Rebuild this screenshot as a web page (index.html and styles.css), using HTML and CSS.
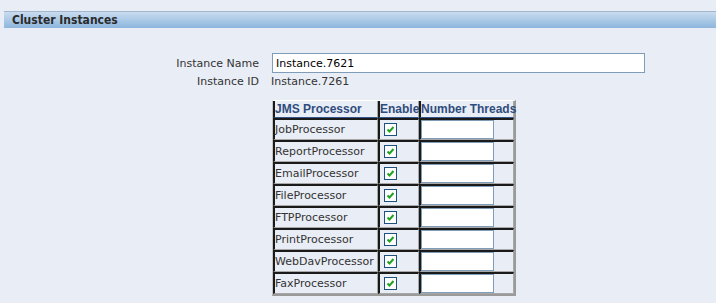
FILE: index.html
```html
<!DOCTYPE html>
<html lang="en">

<head>
  <meta charset="UTF-8">
  <meta name="viewport" content="width=device-width, initial-scale=1.0">
  <title>Cluster Instances</title>
  <link rel="stylesheet" href="styles.css">
</head>

<body>

  <div class="section__head">Cluster Instances</div>

  <div class="section__form">
    <label class="form__label" for="instance-name">Instance Name</label>
    <input class="form__text" id="instance-name" type="text" value="Instance.7621">

    <span class="form__label form__label--row">Instance ID</span>
    <span class="form__value">Instance.7261</span>

    <span></span>
    <table class="processors">
      <colgroup>
        <col class="col__name">
        <col class="col__enable">
        <col class="col__threads">
      </colgroup>
      <thead>
        <tr>
          <th>JMS Processor</th>
          <th>Enable</th>
          <th>Number Threads</th>
        </tr>
      </thead>
      <tbody>
        <tr>
          <td>JobProcessor</td>
          <td><svg class="check" width="13" height="13" viewBox="0 0 13 13"><rect x="0.5" y="0.5" width="12" height="12" fill="#fff" stroke="#1c5180"/><path d="M3.5 6.5l2 2 4-4.5" fill="none" stroke="#21a121" stroke-width="2"/></svg></td>
          <td><input class="threads__input" type="text"></td>
        </tr>
        <tr>
          <td>ReportProcessor</td>
          <td><svg class="check" width="13" height="13" viewBox="0 0 13 13"><rect x="0.5" y="0.5" width="12" height="12" fill="#fff" stroke="#1c5180"/><path d="M3.5 6.5l2 2 4-4.5" fill="none" stroke="#21a121" stroke-width="2"/></svg></td>
          <td><input class="threads__input" type="text"></td>
        </tr>
        <tr>
          <td>EmailProcessor</td>
          <td><svg class="check" width="13" height="13" viewBox="0 0 13 13"><rect x="0.5" y="0.5" width="12" height="12" fill="#fff" stroke="#1c5180"/><path d="M3.5 6.5l2 2 4-4.5" fill="none" stroke="#21a121" stroke-width="2"/></svg></td>
          <td><input class="threads__input" type="text"></td>
        </tr>
        <tr>
          <td>FileProcessor</td>
          <td><svg class="check" width="13" height="13" viewBox="0 0 13 13"><rect x="0.5" y="0.5" width="12" height="12" fill="#fff" stroke="#1c5180"/><path d="M3.5 6.5l2 2 4-4.5" fill="none" stroke="#21a121" stroke-width="2"/></svg></td>
          <td><input class="threads__input" type="text"></td>
        </tr>
        <tr>
          <td>FTPProcessor</td>
          <td><svg class="check" width="13" height="13" viewBox="0 0 13 13"><rect x="0.5" y="0.5" width="12" height="12" fill="#fff" stroke="#1c5180"/><path d="M3.5 6.5l2 2 4-4.5" fill="none" stroke="#21a121" stroke-width="2"/></svg></td>
          <td><input class="threads__input" type="text"></td>
        </tr>
        <tr>
          <td>PrintProcessor</td>
          <td><svg class="check" width="13" height="13" viewBox="0 0 13 13"><rect x="0.5" y="0.5" width="12" height="12" fill="#fff" stroke="#1c5180"/><path d="M3.5 6.5l2 2 4-4.5" fill="none" stroke="#21a121" stroke-width="2"/></svg></td>
          <td><input class="threads__input" type="text"></td>
        </tr>
        <tr>
          <td>WebDavProcessor</td>
          <td><svg class="check" width="13" height="13" viewBox="0 0 13 13"><rect x="0.5" y="0.5" width="12" height="12" fill="#fff" stroke="#1c5180"/><path d="M3.5 6.5l2 2 4-4.5" fill="none" stroke="#21a121" stroke-width="2"/></svg></td>
          <td><input class="threads__input" type="text"></td>
        </tr>
        <tr>
          <td>FaxProcessor</td>
          <td><svg class="check" width="13" height="13" viewBox="0 0 13 13"><rect x="0.5" y="0.5" width="12" height="12" fill="#fff" stroke="#1c5180"/><path d="M3.5 6.5l2 2 4-4.5" fill="none" stroke="#21a121" stroke-width="2"/></svg></td>
          <td><input class="threads__input" type="text"></td>
        </tr>
      </tbody>
    </table>
  </div>

</body>

</html>
```

FILE: styles.css
```css
:root {
  --clr-page: #e9edf5;
  --clr-text: #333333;
  --clr-head: #2f4c7e;
  --clr-field: #7f9db9;
  --clr-rule-dark: #1a1a1a;
  --clr-rule-light: #a8a8a8;

  --fnt-main: "DejaVu Sans", Verdana, sans-serif;
  --fnt-head: "Liberation Sans", Arial, sans-serif;
}

* {
  box-sizing: border-box;
  margin: 0;
  padding: 0;
}

body {
  font-family: var(--fnt-main);
  font-size: 11px;
  color: var(--clr-text);
  background-color: var(--clr-page);
}

/* section title bar */
.section__head {
  margin: 11px 0 0 4px;
  height: 17px;
  padding-left: 8px;
  line-height: 16px;
  font-family: "DejaVu Sans Condensed", "DejaVu Sans", sans-serif;
  font-stretch: condensed;
  font-size: 12px;
  font-weight: 700;
  color: #2b2b2b;
  border-top: 1px solid #a3b6cc;
  background: linear-gradient(#c9dcef, #8db6dd);
}

/* label / value grid */
.section__form {
  display: grid;
  grid-template-columns: 259px auto;
  column-gap: 13px;
  justify-items: start;
  align-items: center;
  padding-top: 25px;
}

.form__label {
  justify-self: end;
}

.form__label--row,
.form__value {
  margin-top: 2px;
  line-height: 14px;
}

.form__value {
  margin-left: -1px;
}

.form__text {
  width: 373px;
  height: 20px;
  padding-left: 3px;
  font-family: var(--fnt-main);
  font-size: 11px;
  color: #000;
  border: 1px solid var(--clr-field);
  background-color: #fff;
  outline: none;
}

/* processors table */
.processors {
  width: 244px;
  margin-top: 11px;
  table-layout: fixed;
  border-collapse: separate;
  border-spacing: 0;
  border-style: solid;
  border-width: 1px 2px 2px 1px;
  border-color: #ffffff #9a9a9a #9a9a9a #c4c4c4;
}

.col__name {
  width: 105px;
}

.col__enable {
  width: 41px;
}

.col__threads {
  width: 95px;
}

.processors th {
  height: 17px;
  padding: 0;
  text-align: left;
  white-space: nowrap;
  font-family: var(--fnt-head);
  font-size: 12px;
  font-weight: 700;
  color: var(--clr-head);
  border-left: 2px solid var(--clr-rule-dark);
  border-right: 1px solid var(--clr-rule-light);
  border-bottom: 1px solid #34568a;
}

.processors td {
  height: 22px;
  padding: 0;
  white-space: nowrap;
  vertical-align: middle;
  border-top: 2px solid var(--clr-rule-dark);
  border-left: 2px solid var(--clr-rule-dark);
  border-right: 1px solid var(--clr-rule-light);
  border-bottom: 1px solid var(--clr-rule-light);
}

.check {
  display: block;
  margin-left: 4px;
}

.threads__input {
  display: block;
  width: 73px;
  height: 19px;
  border: 1px solid var(--clr-field);
  background-color: #fff;
  outline: none;
}
```
